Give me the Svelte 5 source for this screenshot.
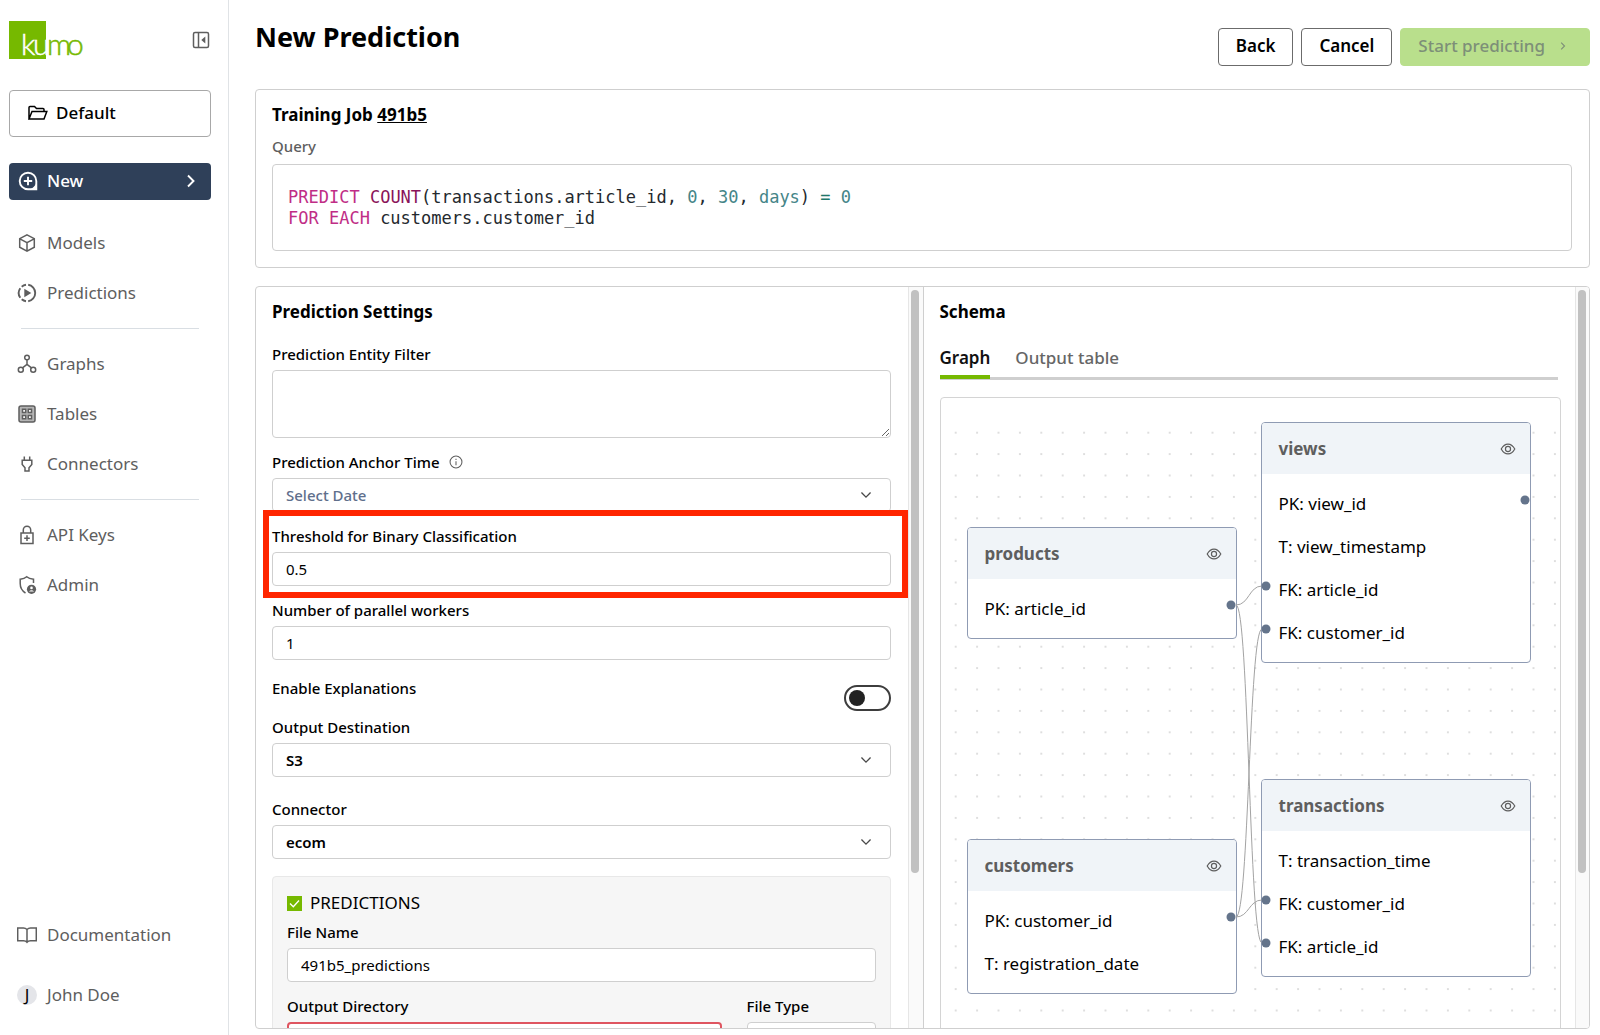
<script>
  const groups = [
    [
      { label: 'Models', icon: 'cube' },
      { label: 'Predictions', icon: 'play' }
    ],
    [
      { label: 'Graphs', icon: 'graph' },
      { label: 'Tables', icon: 'table' },
      { label: 'Connectors', icon: 'plug' }
    ],
    [
      { label: 'API Keys', icon: 'lock' },
      { label: 'Admin', icon: 'shield' }
    ]
  ];

  const nodes = [
    { name: 'products', x: 26, y: 129, rows: ['PK: article_id'] },
    { name: 'views', x: 320, y: 24, rows: ['PK: view_id', 'T: view_timestamp', 'FK: article_id', 'FK: customer_id'] },
    { name: 'customers', x: 26, y: 441, rows: ['PK: customer_id', 'T: registration_date'] },
    { name: 'transactions', x: 320, y: 381, rows: ['T: transaction_time', 'FK: customer_id', 'FK: article_id'] }
  ];

  const handles = [
    [290, 207], [584, 102], [325, 188], [325, 231],
    [290, 519], [325, 502], [325, 545]
  ];

  const edges = [
    [295, 207, 321, 188],
    [295, 207, 321, 545],
    [295, 519, 321, 231],
    [295, 519, 321, 502]
  ];

  let threshold = $state('0.5');
  let workers = $state('1');
  let fileName = $state('491b5_predictions');
  let explain = $state(false);
  let writePredictions = $state(true);
</script>

{#snippet icon(name)}
  <svg class="icon" viewBox="0 0 20 20" aria-hidden="true">
    {#if name === 'cube'}
      <path d="M10 1.8 17.3 5.6V14.2L10 18.2 2.7 14.2V5.6ZM2.9 5.8 10 9.6 17.1 5.8M10 9.6V18" />
    {:else if name === 'play'}
      <path class="thick" d="M11.200 1.800A8.300 8.300 0 0 1 11.200 18.200M9 18.200A8.300 8.300 0 0 1 4.700 16.300M3.300 14.800A8.300 8.300 0 0 1 3.300 5.200M4.700 3.700A8.300 8.300 0 0 1 9 1.800" />
      <path class="solid" d="M7.300 5.800 14.300 10 7.300 14.200Z" />
    {:else if name === 'graph'}
      <circle cx="10" cy="3.500" r="2.300" /><circle cx="3.800" cy="15.800" r="2.500" /><circle cx="16.200" cy="15.800" r="2.500" />
      <path d="M10 5.800V10.300L5.500 13.900M10 10.300 14.500 13.900" />
    {:else if name === 'table'}
      <rect class="tint" x="2" y="2" width="16" height="16" rx="2" />
      <path class="paper" d="M5.500 5.300H8.700V8.500H5.500ZM11.300 5.300H14.500V8.500H11.300ZM5.500 11.500H8.700V14.700H5.500ZM11.300 11.500H14.500V14.700H11.300Z" />
    {:else if name === 'plug'}
      <path d="M7.300 2.500V6M12.700 2.500V6M5.200 6.200H14.800V10.500L12 13.800V17H8V13.800L5.200 10.500Z" />
    {:else if name === 'lock'}
      <path d="M4 8H16V18.500H4ZM6.300 8V5A3.700 3.700 0 0 1 13.700 5V8M10 10.300V16M7.200 13.200H12.800" />
    {:else if name === 'shield'}
      <path d="M8.500 18C4.800 15.700 3.200 12.500 3.200 8.500V4.200Q7.500 3.800 9.700 1.800 12 3.800 16.500 4.200V8" />
      <circle class="solid" cx="14.500" cy="14.300" r="4.600" />
      <circle class="knock" cx="14.500" cy="12.900" r="1.300" /><path class="knock" d="M11.900 16.500Q14.500 13.800 17.100 16.500Z" />
    {:else if name === 'book'}
      <path d="M10 4.500Q8.500 3 6.500 3H0.700V15.700H6.500Q8.800 15.700 10 17.200 11.200 15.700 13.500 15.700H19.300V3H13.500Q11.500 3 10 4.500V17" />
    {:else if name === 'new'}
      <path class="thick" d="M10 1.700A8.300 8.300 0 0 1 18.300 10V18.300H10A8.300 8.300 0 0 1 10 1.700ZM10 5.800V14.200M5.800 10H14.200" />
      <path class="solid" d="M18.300 12V18.300H12Q16.500 16.500 18.300 12Z" />
    {:else if name === 'folder'}
      <path d="M1 16V4.500Q1 3.500 2 3.500H6.500L8.500 5.500H15Q16 5.500 16 6.500V8.500M1 16 4 8.500H18.800L16 16Z" />
    {:else if name === 'collapse'}
      <rect x="2.500" y="2.500" width="15" height="15" rx="1.500" /><path d="M7.500 2.500V17.500" /><path class="solid" d="M14.300 6.500V13.500L10.300 10Z" />
    {:else if name === 'eye'}
      <path d="M1.500 10Q5 3.800 10 3.800T18.500 10Q15 16.200 10 16.200T1.500 10Z" /><circle cx="10" cy="10" r="3.200" />
    {:else if name === 'info'}
      <circle cx="10" cy="10" r="8.500" /><path d="M10 9V14.500M10 5.500V7.200" />
    {:else if name === 'right'}
      <path class="thick" d="M7 4.500 12.500 10 7 15.500" />
    {:else if name === 'down'}
      <path class="thick" d="M3.500 6.500 10 13 16.500 6.500" />
    {/if}
  </svg>
{/snippet}

<div class="app">
  <aside class="sidebar">
    <div class="brand">
      <svg class="logo" viewBox="0 0 76 38" role="img" aria-label="kumo">
        <rect width="37" height="38" />
        <text x="12 24 38 58" y="34"><tspan class="light">ku</tspan>mo</text>
      </svg>
      <button class="plain" aria-label="Collapse sidebar">{@render icon('collapse')}</button>
    </div>
    <button class="workspace">{@render icon('folder')}<span>Default</span></button>
    <button class="new">{@render icon('new')}<span>New</span>{@render icon('right')}</button>
    <nav>
      {#each groups as group}
        <ul>
          {#each group as item}
            <li><a href="#{item.icon}">{@render icon(item.icon)}<span>{item.label}</span></a></li>
          {/each}
        </ul>
      {/each}
    </nav>
    <div class="foot">
      <a href="#docs">{@render icon('book')}<span>Documentation</span></a>
      <a href="#account"><span class="avatar">J</span><span>John Doe</span></a>
    </div>
  </aside>

  <main>
    <header>
      <h1>New Prediction</h1>
      <div class="actions">
        <button class="btn">Back</button>
        <button class="btn">Cancel</button>
        <button class="btn primary" disabled>Start predicting {@render icon('right')}</button>
      </div>
    </header>

    <section class="card job">
      <h2>Training Job <a href="#job">491b5</a></h2>
      <p>Query</p>
      <pre><span class="kw">PREDICT</span> <span class="fn">COUNT</span>(transactions.article_id, <span class="num">0</span>, <span class="num">30</span>, <span class="num">days</span>) <span class="op">=</span> <span class="num">0</span>
<span class="kw">FOR EACH</span> customers.customer_id</pre>
    </section>

    <section class="card split">
      <div class="pane">
        <form class="content settings">
          <h2>Prediction Settings</h2>
          <div class="field first">
            <label for="filter">Prediction Entity Filter</label>
            <textarea id="filter"></textarea>
          </div>
          <div class="field">
            <label for="anchor">Prediction Anchor Time {@render icon('info')}</label>
            <div class="select hint">
              <select id="anchor"><option>Select Date</option></select>{@render icon('down')}
            </div>
          </div>
          <div class="field marked">
            <label for="threshold">Threshold for Binary Classification</label>
            <input id="threshold" type="text" bind:value={threshold} />
          </div>
          <div class="field">
            <label for="workers">Number of parallel workers</label>
            <input id="workers" type="text" bind:value={workers} />
          </div>
          <div class="toggle-row">
            <label for="explain">Enable Explanations</label>
            <input id="explain" class="switch" type="checkbox" role="switch" bind:checked={explain} />
          </div>
          <div class="field output">
            <label for="destination">Output Destination</label>
            <div class="select"><select id="destination"><option>S3</option></select>{@render icon('down')}</div>
          </div>
          <div class="field connector">
            <label for="connector">Connector</label>
            <div class="select"><select id="connector"><option>ecom</option></select>{@render icon('down')}</div>
          </div>
          <div class="group">
            <label class="check">
              <input type="checkbox" bind:checked={writePredictions} />
              <svg viewBox="0 0 15 15" aria-hidden="true"><path d="M3 7.500 6.300 10.800 12 4.500" /></svg>
              PREDICTIONS
            </label>
            <div class="field">
              <label for="file">File Name</label>
              <input id="file" type="text" bind:value={fileName} />
            </div>
            <div class="pair">
              <div class="field">
                <label for="dir">Output Directory</label>
                <input id="dir" class="invalid" type="text" />
              </div>
              <div class="field">
                <label for="type">File Type</label>
                <select id="type"><option></option></select>
              </div>
            </div>
          </div>
        </form>
        <div class="track"><div class="thumb"></div></div>
      </div>

      <div class="pane right">
        <div class="content schema">
          <h2>Schema</h2>
          <div class="tabs" role="tablist">
            <button role="tab" aria-selected="true">Graph</button>
            <button role="tab" aria-selected="false">Output table</button>
          </div>
          <div class="canvas">
            <svg class="dots" aria-hidden="true">
              <defs>
                <pattern id="grid" x="4" y="24" width="21.4" height="21.4" patternUnits="userSpaceOnUse">
                  <circle cx="10.700" cy="10.700" r="0.800" />
                </pattern>
              </defs>
              <rect y="24" width="100%" height="620" fill="url(#grid)" />
            </svg>
            {#each nodes as node}
              <article class="node" style="left:{node.x}px;top:{node.y}px">
                <h3>{node.name}<button class="plain" aria-label="Preview {node.name}">{@render icon('eye')}</button></h3>
                <ul>
                  {#each node.rows as row}<li>{row}</li>{/each}
                </ul>
              </article>
            {/each}
            <svg class="wires" aria-hidden="true">
              {#each edges as [x1, y1, x2, y2]}
                <path d="M{x1} {y1}C{(x1 + x2) / 2} {y1} {(x1 + x2) / 2} {y2} {x2} {y2}" />
              {/each}
              {#each handles as [cx, cy]}
                <circle {cx} {cy} r="4.500" />
              {/each}
            </svg>
          </div>
        </div>
        <div class="track"><div class="thumb"></div></div>
      </div>
    </section>
  </main>
</div>

<style>
  :global(body) {
    margin: 0;
    background: #fff;
  }
  .app, .app * {
    box-sizing: border-box;
  }
  .app {
    display: flex;
    height: 100vh;
    overflow: hidden;
    color: #000;
    font-family: "Noto Sans", "Open Sans", sans-serif;
    font-size: 17px;
    line-height: 24px;
  }
  button, input, select, textarea {
    font: inherit;
    color: inherit;
    margin: 0;
  }
  button {
    cursor: pointer;
  }
  h1, h2, h3, p, ul, pre {
    margin: 0;
    padding: 0;
    list-style: none;
  }
  a {
    color: inherit;
  }
  .icon {
    width: 20px;
    height: 20px;
    flex: none;
    fill: none;
    stroke: currentColor;
    stroke-width: 1.5;
  }
  .icon .solid {
    fill: currentColor;
    stroke: none;
  }
  .icon .tint {
    fill: #b5b5b5;
  }
  .icon .paper {
    fill: #fff;
  }
  .icon .knock {
    fill: #fff;
    stroke: none;
  }
  .icon .thick {
    stroke-width: 1.9;
  }
  .plain {
    display: flex;
    padding: 0;
    border: 0;
    background: none;
    color: #5e5e5e;
  }

  .sidebar {
    display: flex;
    flex-direction: column;
    width: 229px;
    flex: none;
    padding: 21px 17px 20px 9px;
    border-right: 1px solid #e0e3e6;
    color: #5e5e5e;
  }
  .brand {
    display: flex;
    justify-content: space-between;
    align-items: center;
    height: 38px;
  }
  .logo {
    width: 76px;
    height: 38px;
    overflow: visible;
    fill: #76b900;
    font-family: Lato, sans-serif;
    font-size: 30px;
    font-weight: 300;
  }
  .logo text {
    stroke: #76b900;
    stroke-width: 0.5;
  }
  .logo .light {
    fill: #fff;
    stroke: #fff;
  }
  .workspace, .new {
    display: flex;
    align-items: center;
    border-radius: 4px;
    text-align: left;
  }
  .workspace {
    height: 47px;
    margin-top: 31px;
    padding: 0 18px 2px;
    gap: 8px;
    border: 1px solid #a8a8a8;
    background: #fff;
    color: #000;
    font-weight: 500;
  }
  .new {
    height: 37px;
    margin-top: 26px;
    padding: 0 10px 1px 9px;
    gap: 9px;
    border: 0;
    background: #2f4059;
    color: #fff;
    font-weight: 500;
  }
  .new span {
    flex: 1;
  }
  nav {
    margin-top: 18px;
    padding-right: 8px;
  }
  nav ul {
    padding-bottom: 10px;
  }
  nav ul + ul {
    padding-top: 11px;
    position: relative;
  }
  nav ul + ul::before {
    content: "";
    position: absolute;
    top: 0;
    left: 12px;
    right: 4px;
    border-top: 1px solid #d9dee3;
  }
  .sidebar a {
    display: flex;
    align-items: center;
    gap: 10px;
    height: 50px;
    padding-left: 8px;
    text-decoration: none;
  }
  .foot {
    display: flex;
    flex-direction: column;
    gap: 10px;
    margin-top: auto;
    margin-bottom: -5px;
  }
  .avatar {
    width: 20px;
    border-radius: 50%;
    background: #e4e5e9;
    color: #000;
    line-height: 20px;
    text-align: center;
  }

  main {
    display: flex;
    flex-direction: column;
    flex: 1;
    min-width: 0;
    padding: 18px 10px 6px 26px;
  }
  header {
    display: flex;
    justify-content: space-between;
    height: 71px;
  }
  h1 {
    font-size: 27px;
    line-height: 38px;
    font-weight: 700;
  }
  .actions {
    display: flex;
    gap: 8px;
    padding-top: 10px;
  }
  .btn {
    display: flex;
    align-items: center;
    gap: 12px;
    height: 38px;
    padding: 0 17px 2px;
    border: 1px solid #6b6b6b;
    border-radius: 4px;
    background: #fff;
    color: #000;
    font-weight: 600;
  }
  .btn.primary {
    padding-right: 20px;
    border-color: #b9df8c;
    background: #b9df8c;
    color: #7d8f78;
    font-weight: 500;
  }
  .btn .icon {
    width: 12px;
    height: 12px;
  }
  .card {
    border: 1px solid #cfcfcf;
    border-radius: 4px;
  }
  h2 {
    font-size: 17px;
    line-height: 24px;
    font-weight: 700;
  }
  .job {
    padding: 13px 17px 16px 16px;
  }
  .job p {
    margin: 9px 0 8px;
    color: #5e5e5e;
    font-size: 15px;
    line-height: 20px;
    font-weight: 500;
  }
  pre {
    height: 87px;
    padding: 22px 15px;
    border: 1px solid #cfcfcf;
    border-radius: 4px;
    color: #24292e;
    font-family: "DejaVu Sans Mono", monospace;
    font-size: 17px;
    line-height: 21px;
  }
  .kw {
    color: #c02d86;
  }
  .fn {
    color: #8a1459;
  }
  .num {
    color: #458588;
  }
  .op {
    color: #22776a;
  }

  .split {
    display: grid;
    grid-template-columns: 1fr 1fr;
    flex: 1;
    min-height: 0;
    margin-top: 18px;
    overflow: hidden;
  }
  .pane {
    display: flex;
    min-width: 0;
    min-height: 0;
    overflow: hidden;
  }
  .pane.right {
    border-left: 1px solid #cfcfcf;
  }
  .content {
    flex: 1;
    min-width: 0;
    padding: 13px 17px 0 16px;
  }
  .content.schema {
    padding-right: 14px;
  }
  .track {
    width: 15px;
    flex: none;
    padding: 3px 4px 0 2px;
    border-left: 1px solid #e6e6e6;
    background: #fafafa;
  }
  .right .track {
    width: 14px;
    padding-right: 3px;
  }
  .thumb {
    height: 79%;
    border-radius: 4px;
    background: #c1c1c1;
  }

  .field {
    display: flex;
    flex-direction: column;
    gap: 6px;
    margin-top: 14px;
  }
  .field.first {
    margin-top: 20px;
  }
  .field label, .toggle-row label {
    display: flex;
    align-items: center;
    gap: 9px;
    font-size: 15px;
    line-height: 20px;
    font-weight: 500;
  }
  .field label .icon {
    width: 14px;
    height: 14px;
    color: #5e5e5e;
  }
  .field input, .field select, textarea {
    width: 100%;
    height: 34px;
    padding: 0 13px;
    border: 1px solid #cfcfcf;
    border-radius: 4px;
    background: #fff;
    font-size: 15px;
    appearance: none;
  }
  textarea {
    display: block;
    height: 68px;
    resize: vertical;
  }
  .field .invalid {
    border: 2px solid #df5560;
  }
  .select {
    position: relative;
  }
  .select select {
    display: block;
    font-weight: 600;
  }
  .select.hint select {
    color: #5f6f8c;
    font-weight: 500;
  }
  .select .icon {
    position: absolute;
    right: 18px;
    top: 10px;
    width: 14px;
    height: 14px;
    color: #4a4a4a;
    pointer-events: none;
  }
  .marked {
    position: relative;
  }
  .marked::after {
    content: "";
    position: absolute;
    inset: -16px -17px -12px -9px;
    border: 6px solid #ff2600;
    pointer-events: none;
  }
  .toggle-row {
    display: flex;
    justify-content: space-between;
    align-items: flex-start;
    margin-top: 18px;
  }
  .switch {
    width: 47px;
    height: 26px;
    margin-top: 7px;
    padding: 3px;
    border: 2px solid #3d3d3d;
    border-radius: 13px;
    appearance: none;
  }
  .switch::before {
    content: "";
    display: block;
    width: 16px;
    height: 16px;
    border-radius: 50%;
    background: #222;
  }
  .switch:checked::before {
    margin-left: auto;
  }
  .field.output {
    margin-top: 6px;
  }
  .field.connector {
    margin-top: 22px;
  }
  .group {
    margin-top: 17px;
    padding: 14px 14px 40px;
    border: 1px solid #e8e8e8;
    border-radius: 4px 4px 0 0;
    background: #f6f6f6;
  }
  .check {
    display: flex;
    align-items: center;
    gap: 8px;
    position: relative;
  }
  .check input {
    width: 15px;
    height: 15px;
    border: 1px solid #76b900;
    appearance: none;
  }
  .check input:checked {
    background: #76b900;
  }
  .check svg {
    position: absolute;
    left: 0;
    width: 15px;
    height: 15px;
    fill: none;
    stroke: #fff;
    stroke-width: 1.3;
  }
  .group .field {
    margin-top: 7px;
  }
  .pair {
    display: grid;
    grid-template-columns: 1fr 129px;
    gap: 25px;
    margin-top: 14px;
  }
  .group .pair .field {
    margin-top: 0;
  }

  .tabs {
    display: flex;
    gap: 25px;
    height: 43px;
    margin: 13px 3px 17px 0;
    border-bottom: 3px solid #cfcfcf;
  }
  .tabs button {
    height: 42px;
    padding: 3px 0 0;
    border: 0;
    border-bottom: 4px solid transparent;
    background: none;
    color: #666;
    font-weight: 500;
  }
  .tabs [aria-selected="true"] {
    border-color: #76b900;
    color: #111;
    font-weight: 600;
  }
  .canvas {
    position: relative;
    height: 700px;
    border: 1px solid #d4d4d4;
    border-radius: 4px 4px 0 0;
  }
  .dots, .wires {
    position: absolute;
    inset: 0;
    width: 100%;
    height: 100%;
  }
  .dots circle {
    fill: #b4b4b4;
  }
  .wires {
    pointer-events: none;
    fill: #64748b;
  }
  .wires path {
    fill: none;
    stroke: #a3a3a3;
  }
  .node {
    position: absolute;
    width: 270px;
    border: 1px solid #8f9bb3;
    border-radius: 4px;
    background: #fff;
    overflow: hidden;
  }
  h3 {
    display: flex;
    align-items: center;
    justify-content: space-between;
    height: 51px;
    padding: 0 14px 0 17px;
    background: #f0f4f8;
    color: #5e5e5e;
    font-size: 17px;
    font-weight: 700;
  }
  h3 .icon {
    width: 16px;
    height: 16px;
  }
  .node ul {
    padding: 8px 17px;
  }
  .node li {
    line-height: 43px;
  }
</style>
